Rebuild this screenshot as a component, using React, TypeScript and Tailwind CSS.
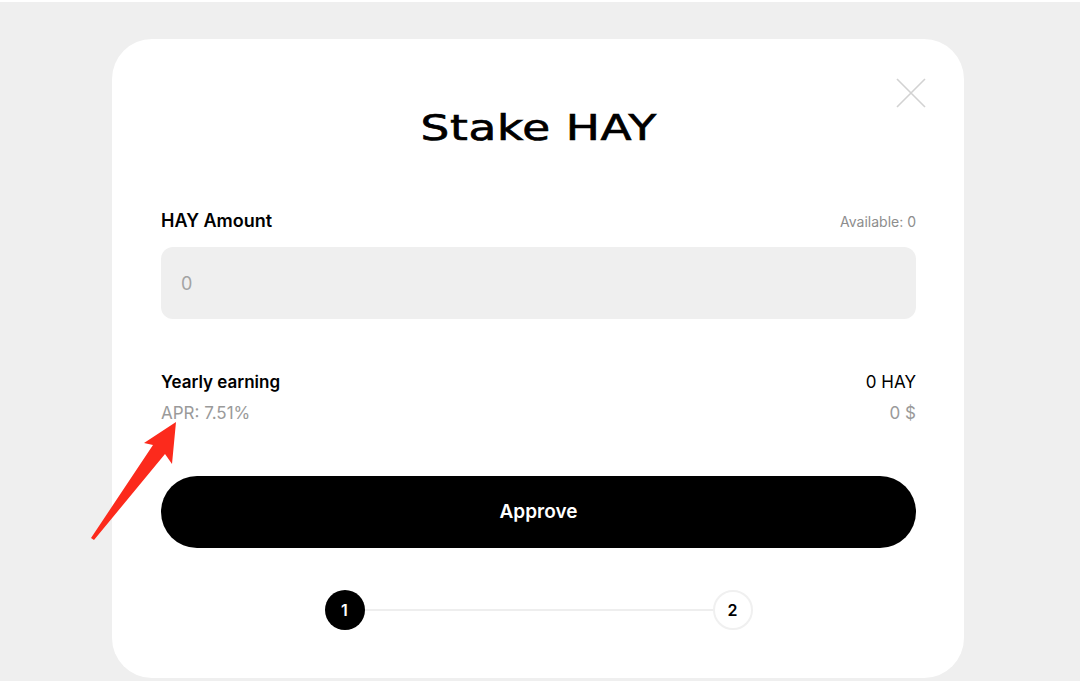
const Arrow = () => (
  <svg className="absolute left-[88px] top-[418px]" width="92" height="126" viewBox="0 0 92 126">
    <path d="M88 4 L84 46 L77 36 L6 122 L3 120 L65 27 L56 25 Z" fill="#fc2a1c" />
  </svg>
);

const CloseIcon = () => (
  <svg width="30" height="30" viewBox="0 0 30 30" fill="none">
    <path d="M1 1 L29 29 M29 1 L1 29" stroke="#d2d2d2" strokeWidth="1.6" />
  </svg>
);

export default function App() {
  return (
    <div
      className="relative h-[681px] w-[1080px] overflow-hidden bg-[#efefef]"
      style={{ fontFamily: 'Inter, "Liberation Sans", sans-serif' }}
    >
      <div className="h-[2px] bg-white" />
      <div className="ml-[112px] mt-[37px] h-[639px] w-[852px] rounded-[40px] bg-white px-[48px] pl-[49px]">
        <div className="relative pt-[68px]">
          <button type="button" className="absolute right-[-10px] top-[39px]">
            <CloseIcon />
          </button>
          <h1 className="text-center text-[36px] leading-[40px] text-black">
            <span
              className="inline-block scale-x-[1.26] tracking-[0.5px] [-webkit-text-stroke:0.7px_black]"
              style={{ fontFamily: '"DejaVu Sans", sans-serif' }}
            >
              Stake HAY
            </span>
          </h1>
        </div>

        <div className="mt-[61px] flex items-end justify-between">
          <span className="text-[18px] font-semibold leading-[24px] text-black">HAY Amount</span>
          <span className="text-[14px] leading-[22px] text-[#8d8d8d]">Available: 0</span>
        </div>
        <div className="mt-[14px] flex h-[72px] items-center rounded-[12px] bg-[#efefef] px-[20px] text-[18px] text-[#a3a3a3]">
          0
        </div>

        <div className="mt-[52px] flex items-center justify-between text-[17px] leading-[22px]">
          <span className="font-semibold text-black">Yearly earning</span>
          <span className="text-black">0 HAY</span>
        </div>
        <div className="mt-[9px] flex items-center justify-between text-[17px] leading-[22px] text-[#9a9a9a]">
          <span>APR: 7.51%</span>
          <span>0 $</span>
        </div>

        <button
          type="button"
          className="mt-[52px] flex h-[72px] w-full items-center justify-center rounded-full bg-black text-[19px] font-semibold text-white"
        >
          Approve
        </button>

        <div className="mt-[42px] flex items-center justify-center">
          <div className="flex h-[40px] w-[40px] items-center justify-center rounded-full bg-black text-[16px] font-semibold text-white">
            1
          </div>
          <div className="h-[2px] w-[348px] bg-[#eeeeee]" />
          <div className="flex h-[40px] w-[40px] items-center justify-center rounded-full border-2 border-[#f0f0f0] bg-white text-[16px] font-semibold text-black">
            2
          </div>
        </div>
      </div>
      <Arrow />
    </div>
  );
}
